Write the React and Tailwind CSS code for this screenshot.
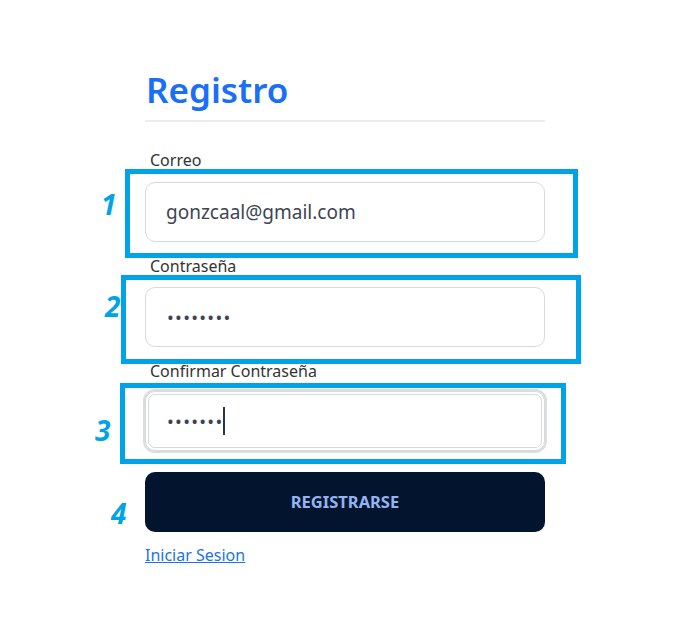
export default function App() {
  const font = { fontFamily: '"Noto Sans", "Open Sans", sans-serif' };
  return (
    <div className="relative w-[700px] h-[643px] bg-white" style={font}>
      <div className="flex flex-col w-[400px] ml-[145px] pt-[68px]">
        <h1 className="text-[35px] leading-[44px] font-semibold text-[#1a6ff5] pl-[1px]">Registro</h1>
        <div className="h-[2px] bg-[#ebebf0] mt-[8px]"></div>
        <label className="mt-[28px] pl-[5px] text-[16px] leading-[20px] text-[#333]">Correo</label>
        <div className="mt-[12px] h-[60px] rounded-[10px] border border-[#d6d9de] flex items-center pl-[20px] text-[19px] text-[#3d4452]">
          gonzcaal@gmail.com
        </div>
        <label className="mt-[14px] pl-[5px] text-[16px] leading-[20px] text-[#333]">Contraseña</label>
        <div className="mt-[11px] h-[60px] rounded-[10px] border border-[#d6d9de] flex items-center pl-[21px] text-[18px] text-[#3d4452] tracking-[1.3px]">
          ••••••••
        </div>
        <label className="mt-[14px] pl-[5px] text-[16px] leading-[20px] text-[#333]">Confirmar Contraseña</label>
        <div className="mt-[10px] h-[60px] rounded-[10px] border border-[#d6d9de] ring-2 ring-[#dcdde0] ring-offset-0 outline outline-1 outline-offset-[-4px] outline-[#d6d9de] flex items-center pl-[21px] text-[18px] text-[#3d4452]">
          <span className="tracking-[1.3px]">•••••••</span>
          <span className="w-[2px] h-[28px] bg-[#2b3445]"></span>
        </div>
        <button className="mt-[21px] h-[60px] rounded-[10px] bg-[#03142f] text-[#93b4f0] font-bold text-[16.5px]">REGISTRARSE</button>
        <a href="#" className="mt-[11px] text-[16px] leading-[24px] text-[#1a73e8] underline self-start">Iniciar Sesion</a>
      </div>

      <div className="absolute left-[125px] top-[169px] w-[453px] h-[89px] border-[5px] border-[#00a3e8]"></div>
      <div className="absolute left-[121px] top-[275px] w-[460px] h-[89px] border-[5px] border-[#00a3e8]"></div>
      <div className="absolute left-[120px] top-[383px] w-[446px] h-[81px] border-[5px] border-[#00a3e8]"></div>

      <span className="absolute left-[101px] top-[186px] text-[28px] leading-[36px] font-bold italic text-[#00a3e8]">1</span>
      <span className="absolute left-[105px] top-[288px] text-[28px] leading-[36px] font-bold italic text-[#00a3e8]">2</span>
      <span className="absolute left-[95px] top-[412px] text-[28px] leading-[36px] font-bold italic text-[#00a3e8]">3</span>
      <span className="absolute left-[111px] top-[495px] text-[28px] leading-[36px] font-bold italic text-[#00a3e8]">4</span>
    </div>
  );
}
